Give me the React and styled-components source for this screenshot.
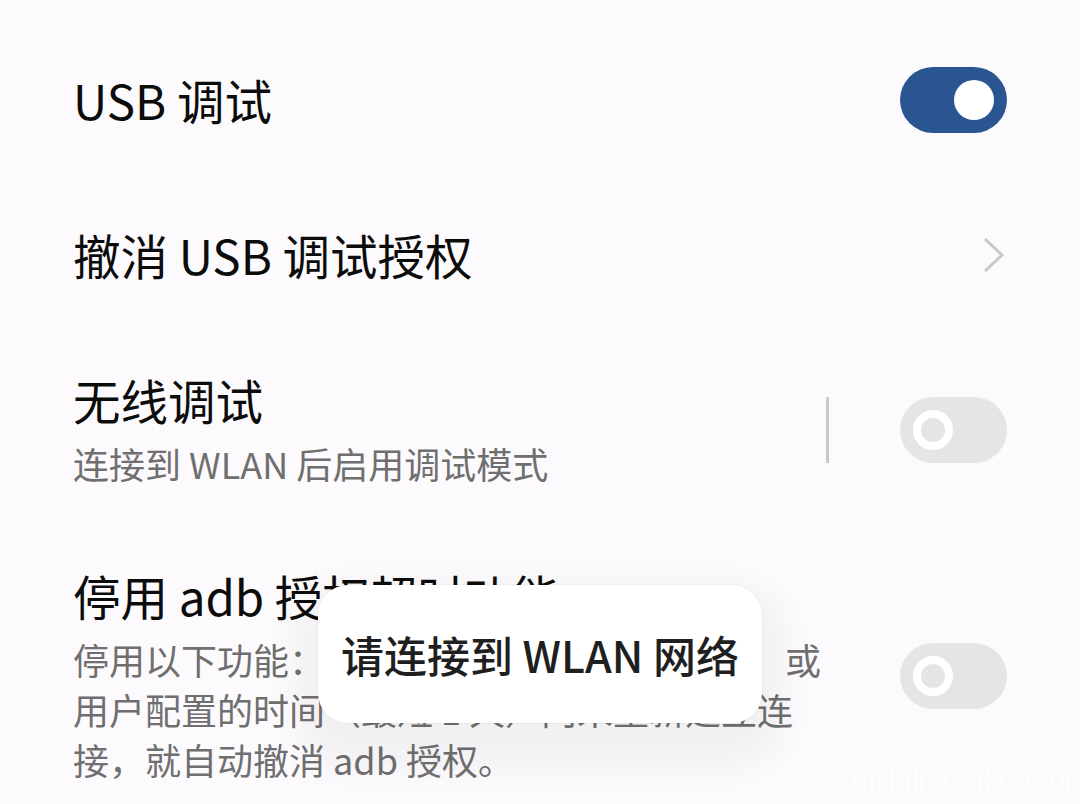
import React from "react";
import styled, { createGlobalStyle } from "styled-components";

const GlobalStyle = createGlobalStyle`
  html, body {
    margin: 0;
    padding: 0;
    background: #fcfafc;
  }
  body {
    font-family: "Noto Sans CJK SC", "Noto Sans", sans-serif;
  }
`;

const App = () => {
  return (
    <>
      <GlobalStyle />
      <StPage>
        <StRow>
          <StTexts>
            <StTitle>USB 调试</StTitle>
          </StTexts>
          <Switch on />
        </StRow>

        <StRow>
          <StTexts>
            <StTitle>撤消 USB 调试授权</StTitle>
          </StTexts>
          <StChevron width="26" height="40" viewBox="0 0 26 40">
            <path d="M4 4 L21 20 L4 36" />
          </StChevron>
        </StRow>

        <StRow multi>
          <StTexts>
            <StTitle>无线调试</StTitle>
            <StSummary>连接到 WLAN 后启用调试模式</StSummary>
          </StTexts>
          <StControls>
            <StDivider />
            <Switch />
          </StControls>
        </StRow>

        <StRow multi>
          <StTexts>
            <StTitle>停用 adb 授权超时功能</StTitle>
            <StSummary>
              停用以下功能：如果系统在默认时间（7 天）或
              <br />
              用户配置的时间（最短 1 天）内未重新建立连
              <br />
              接，就自动撤消 adb 授权。
            </StSummary>
          </StTexts>
          <Switch />
        </StRow>

        <StToast>请连接到 WLAN 网络</StToast>
        <StMark>bilibili AzukiAtsui</StMark>
      </StPage>
    </>
  );
};

const Switch = ({ on }) => (
  <StTrack on={on ? 1 : 0}>
    <StKnob on={on ? 1 : 0} />
  </StTrack>
);

export default App;

const StPage = styled.div`
  position: relative;
  width: 1080px;
  height: 804px;
  overflow: hidden;
  padding-top: 20px;
  box-sizing: border-box;
  background: #fcfafc;
`;

const StRow = styled.div`
  display: flex;
  align-items: center;
  justify-content: space-between;
  padding: ${({ multi }) => (multi ? "42px 73px 38px" : "47px 73px")};
`;

const StTexts = styled.div`
  display: flex;
  flex-direction: column;
  gap: 10px;
`;

const StTitle = styled.div`
  font-size: 47.5px;
  line-height: 56px;
  color: #0c0c0c;
  white-space: nowrap;
`;

const StSummary = styled.div`
  font-size: 36px;
  line-height: 50px;
  color: #6f6f6f;
  white-space: nowrap;
`;

const StControls = styled.div`
  display: flex;
  align-items: center;
  gap: 71px;
`;

const StDivider = styled.div`
  width: 3px;
  height: 66px;
  background: #cbc7cb;
`;

const StTrack = styled.div`
  flex: none;
  width: 107px;
  height: 66px;
  border-radius: 33px;
  background: ${({ on }) => (on ? "#2b5590" : "#e6e5e6")};
  display: flex;
  align-items: center;
  justify-content: ${({ on }) => (on ? "flex-end" : "flex-start")};
  padding: 0 13px;
  box-sizing: border-box;
`;

const StKnob = styled.div`
  width: ${({ on }) => (on ? "40px" : "24px")};
  height: ${({ on }) => (on ? "40px" : "24px")};
  border-radius: 50%;
  background: ${({ on }) => (on ? "#ffffff" : "#e6e5e6")};
  border: ${({ on }) => (on ? "none" : "8px solid #ffffff")};
`;

const StChevron = styled.svg`
  flex: none;
  path {
    fill: none;
    stroke: #c9c7c9;
    stroke-width: 3;
  }
`;

const StToast = styled.div`
  position: absolute;
  left: 318px;
  top: 585px;
  width: 444px;
  height: 138px;
  border-radius: 30px;
  background: #ffffff;
  display: flex;
  align-items: center;
  justify-content: center;
  font-size: 43px;
  font-weight: 500;
  color: #1f1f1f;
  box-shadow: 0 0 0 1px rgba(0, 0, 0, 0.03), 0 22px 36px 22px rgba(0, 0, 0, 0.045);
`;

const StMark = styled.div`
  position: absolute;
  right: 8px;
  bottom: 6px;
  font-family: "Liberation Sans", sans-serif;
  font-size: 30px;
  color: #ffffff;
  opacity: 0.8;
`;
